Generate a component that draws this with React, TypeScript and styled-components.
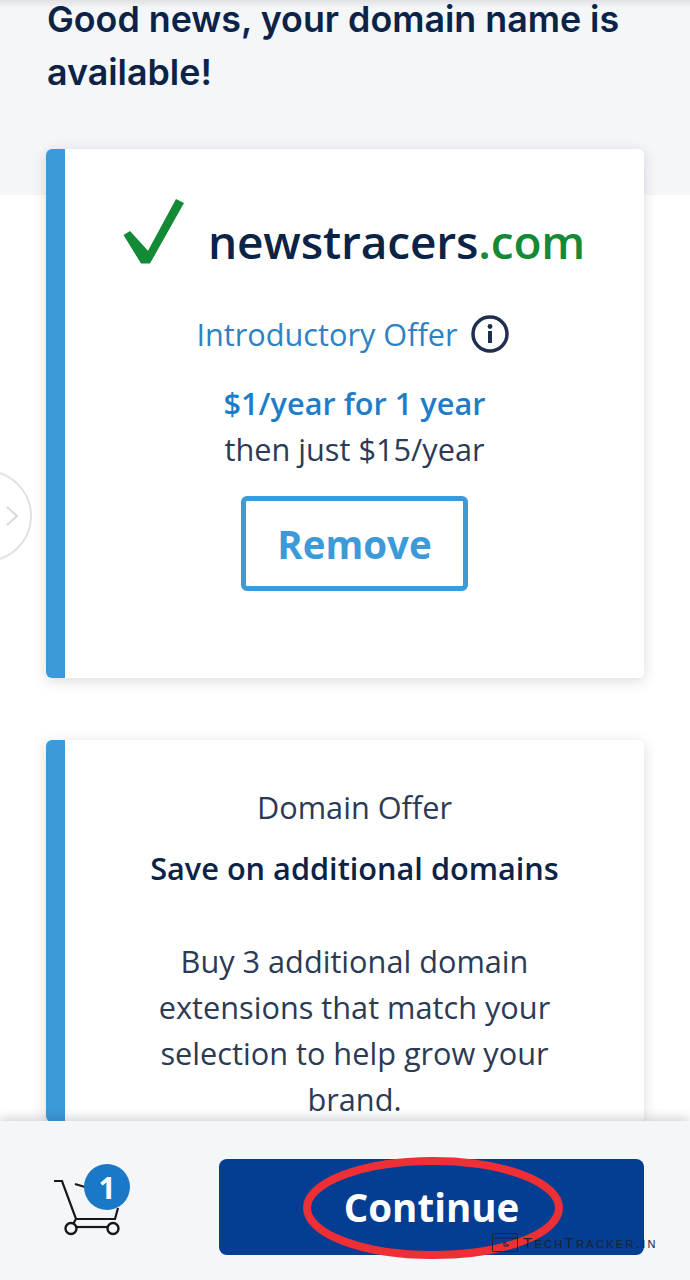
import React from 'react';
import styled, { createGlobalStyle } from 'styled-components';

const GlobalStyle = createGlobalStyle`
	html, body {
		margin: 0;
		padding: 0;
		background: #fff;
	}
	* {
		box-sizing: border-box;
	}
`;

const Screen = styled.div`
	position: relative;
	width: 690px;
	height: 1280px;
	overflow: hidden;
	background: #fff;
	font-family: 'Open Sans', 'Liberation Sans', sans-serif;
	color: #2b3a55;
`;

const Hero = styled.header`
	height: 195px;
	padding: 0 47px;
	background: linear-gradient(#dfe1e3 0, #f4f6f8 8px);
`;

const Title = styled.h1`
	display: flex;
	flex-direction: column;
	gap: 14px;
	margin: 0;
	font-family: Inter, 'Open Sans', sans-serif;
	font-size: 35.8px;
	font-weight: 600;
	line-height: 39px;
	white-space: nowrap;
	color: #0b2347;
`;

const CardList = styled.main`
	display: flex;
	flex-direction: column;
	gap: 62px;
	margin: -46px 46px 0;
`;

const Card = styled.section<{ $height?: number }>`
	height: ${(p) => (p.$height ? `${p.$height}px` : 'auto')};
	display: flex;
	flex-direction: column;
	align-items: center;
	padding-left: 19px;
	border-radius: 6px;
	background: linear-gradient(90deg, #3c9ad9 19px, #fff 19px);
	box-shadow: 0 3px 14px rgba(30, 40, 60, 0.16);
	text-align: center;
`;

const DomainRow = styled.div`
	display: flex;
	align-items: flex-end;
	gap: 23px;
	height: 67px;
	margin-top: 50px;
	margin-left: -1px;
	svg {
		align-self: flex-start;
	}
`;

const DomainName = styled.div`
	font-size: 46px;
	font-weight: 600;
	line-height: 50px;
	letter-spacing: -0.15px;
	color: #0b2347;
	span {
		color: #128a36;
	}
`;

const OfferRow = styled.div`
	display: flex;
	align-items: center;
	gap: 13px;
	margin-top: 48px;
	margin-left: -4px;
	font-size: 30.7px;
	line-height: 40px;
	color: #2b82c4;
`;

const Price = styled.div`
	margin-top: 26px;
	font-size: 30.7px;
	font-weight: 600;
	line-height: 46px;
	color: #1f7cc7;
`;

const PriceNote = styled.div`
	font-size: 30.7px;
	line-height: 46px;
	color: #2b3a55;
`;

const OutlineButton = styled.button`
	width: 227px;
	height: 95px;
	margin-top: 24px;
	padding: 0;
	border: 5px solid #3c9ad9;
	border-radius: 6px;
	background: #fff;
	font-family: inherit;
	font-size: 38.5px;
	font-weight: 700;
	color: #3c9ad9;
`;

const OfferLabel = styled.div`
	margin-top: 47px;
	font-size: 30.7px;
	line-height: 40px;
	color: #2b3a55;
`;

const OfferHeading = styled.div`
	margin-top: 20px;
	font-size: 30.7px;
	font-weight: 600;
	line-height: 42px;
	color: #0b2347;
`;

const OfferBody = styled.p`
	width: 420px;
	margin: 49px 0 0;
	font-size: 30.7px;
	line-height: 46px;
	color: #2b3a55;
`;

const SideArrow = styled.div`
	position: absolute;
	top: 470px;
	left: -60px;
	width: 92px;
	height: 92px;
	display: flex;
	align-items: center;
	justify-content: flex-end;
	padding-right: 11px;
	border: 2.5px solid #e2e2e2;
	border-radius: 50%;
	background: #fff;
`;

const Footer = styled.footer`
	position: absolute;
	left: 0;
	right: 0;
	bottom: 0;
	height: 159px;
	display: flex;
	align-items: flex-start;
	justify-content: space-between;
	padding: 38px 46px 0 54px;
	background: #f4f6f8;
	box-shadow: 0 -3px 10px rgba(30, 40, 60, 0.2);
`;

const CartWrap = styled.div`
	position: relative;
	width: 76px;
	height: 78px;
	margin-top: 5px;
`;

const CartBadge = styled.span`
	position: absolute;
	top: 0;
	left: 30px;
	width: 46px;
	height: 46px;
	display: flex;
	align-items: center;
	justify-content: center;
	border-radius: 50%;
	background: #1b78c8;
	color: #fff;
	font-size: 30px;
	font-weight: 700;
`;

const PrimaryButton = styled.button`
	width: 425px;
	height: 96px;
	padding: 0;
	border: 0;
	border-radius: 8px;
	background: #033e92;
	font-family: inherit;
	font-size: 38.5px;
	font-weight: 700;
	color: #fff;
`;

const RedCircle = styled.svg`
	position: absolute;
	top: 1155px;
	left: 302px;
`;

const Watermark = styled.div`
	position: absolute;
	top: 1233px;
	left: 492px;
	display: flex;
	align-items: center;
	gap: 5px;
	font-family: 'Liberation Sans', sans-serif;
	font-size: 15px;
	font-variant: small-caps;
	letter-spacing: 2.3px;
	color: #1c2230;
`;

const App = () => {
	return (
		<Screen>
			<GlobalStyle />
			<Hero>
				<Title>
					<span>Good news, your domain name is</span>
					<span>available!</span>
				</Title>
			</Hero>
			<CardList>
				<Card $height={529}>
					<DomainRow>
						<svg width="62" height="65" viewBox="0 0 62 65">
							<path
								d="M0.5 36 L7 32 L25 51.7 L53 0 L61 4 L27 64.5 L18 64.5 Z"
								fill="#128a36"
							/>
						</svg>
						<DomainName>
							newstracers<span>.com</span>
						</DomainName>
					</DomainRow>
					<OfferRow>
						Introductory Offer
						<svg width="38" height="38" viewBox="0 0 38 38">
							<circle cx="19" cy="19" r="17" fill="none" stroke="#1f2f4d" strokeWidth="3.5" />
							<circle cx="19" cy="11.5" r="2.4" fill="#1f2f4d" />
							<rect x="17" y="16" width="4" height="12" fill="#1f2f4d" />
						</svg>
					</OfferRow>
					<Price>$1/year for 1 year</Price>
					<PriceNote>then just $15/year</PriceNote>
					<OutlineButton>Remove</OutlineButton>
				</Card>
				<Card>
					<OfferLabel>Domain Offer</OfferLabel>
					<OfferHeading>Save on additional domains</OfferHeading>
					<OfferBody>
						Buy 3 additional domain extensions that match your selection to help grow your brand.
					</OfferBody>
				</Card>
			</CardList>
			<SideArrow>
				<svg width="14" height="22" viewBox="0 0 14 22">
					<path d="M2 2 L12 11 L2 20" fill="none" stroke="#d9d9d9" strokeWidth="2" />
				</svg>
			</SideArrow>
			<Footer>
				<CartWrap>
					<svg width="70" height="78" viewBox="0 0 70 78">
						<path
							d="M0 17 H8 L22 55 H61 L64 44 M22 55 L19 60 M21 20 L31 23"
							fill="none"
							stroke="#16181d"
							strokeWidth="2.2"
						/>
						<path d="M23 63 H53" fill="none" stroke="#16181d" strokeWidth="2.2" />
						<circle cx="17" cy="64.5" r="5.5" fill="none" stroke="#16181d" strokeWidth="2.4" />
						<circle cx="59" cy="64.5" r="5.5" fill="none" stroke="#16181d" strokeWidth="2.4" />
					</svg>
					<CartBadge>1</CartBadge>
				</CartWrap>
				<PrimaryButton>Continue</PrimaryButton>
			</Footer>
			<RedCircle width="262" height="106" viewBox="0 0 262 106">
				<ellipse cx="131" cy="53" rx="126" ry="47" fill="none" stroke="#ee2f36" strokeWidth="8" />
			</RedCircle>
			<Watermark>
				<svg width="26" height="19" viewBox="0 0 26 19">
					<rect x="0.5" y="0.5" width="25" height="18" rx="1" fill="none" stroke="#1c2230" />
					<path d="M1 5 H25 M12 9 L17 13 M12 9 V13 H16" fill="none" stroke="#1c2230" />
				</svg>
				TechTracker.in
			</Watermark>
		</Screen>
	);
};

export default App;
